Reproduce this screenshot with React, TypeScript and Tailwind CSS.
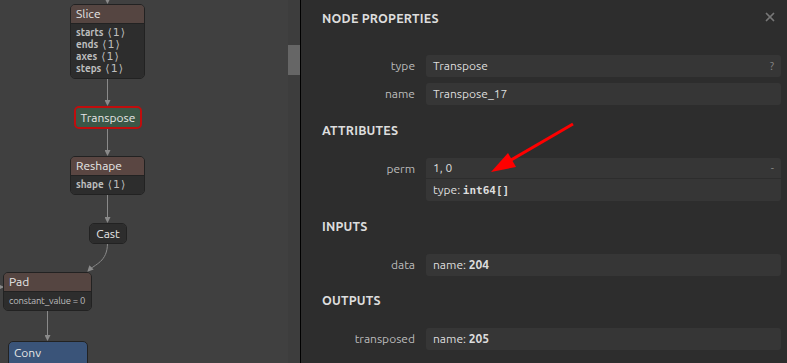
import { X } from "lucide-react";

const sans = "font-['Ubuntu','Noto_Sans','Open_Sans',sans-serif]";

function Attr({ name }: { name: string }) {
  return (
    <span>
      {name}
      <span className="font-normal font-['DejaVu_Sans',sans-serif] text-[11px] ml-[4px] tracking-[1px]">⟨1⟩</span>
    </span>
  );
}

function GraphNode({
  title,
  x,
  y,
  w,
  head,
  attrs,
  plain,
  outline = false,
}: {
  title: string;
  x: number;
  y: number;
  w: number;
  head: string;
  attrs?: string[];
  plain?: string;
  outline?: boolean;
}) {
  const hasBody = !!attrs || !!plain;
  return (
    <div
      className={`absolute rounded-[5px] overflow-hidden ${
        outline ? "border-2 border-[#c00d0d]" : "border border-[#222]"
      }`}
      style={{ left: x, top: y, width: w }}
    >
      <div
        className={`h-[19px] px-[5px] flex items-center text-[12px] text-[#e6e6e6] ${
          hasBody ? "border-b border-[#222]" : ""
        }`}
        style={{ background: head, justifyContent: hasBody ? "flex-start" : "center" }}
      >
        {title}
      </div>
      {hasBody && (
        <div className="bg-[#2d2d2d] px-[5px] py-[3px] flex flex-col">
          {attrs?.map((a) => (
            <div
              key={a}
              className="h-[12px] leading-[12px] text-[10px] text-[#bdbdbd] font-bold whitespace-nowrap"
            >
              <Attr name={a} />
            </div>
          ))}
          {plain && (
            <div className="h-[12px] leading-[12px] text-[9.5px] tracking-[-0.2px] text-[#bdbdbd] whitespace-nowrap">
              {plain}
            </div>
          )}
        </div>
      )}
    </div>
  );
}

function Graph() {
  return (
    <div className="relative w-[300px] h-full bg-[#404040] overflow-hidden">
      <svg className="absolute inset-0" width="300" height="363">
        <defs>
          <marker id="ah" markerWidth="6" markerHeight="6" refX="5" refY="3" orient="auto">
            <path d="M0,0 L6,3 L0,6 z" fill="#8a8a8a" />
          </marker>
        </defs>
        <g stroke="#8a8a8a" strokeWidth="1" fill="none" markerEnd="url(#ah)">
          <line x1="107.5" y1="-5" x2="107.5" y2="3" />
          <line x1="107.5" y1="78" x2="107.5" y2="105" />
          <line x1="107.5" y1="127" x2="107.5" y2="155" />
          <line x1="107.5" y1="194" x2="107.5" y2="222" />
          <path d="M107.5,243 C107.5,262 95,264 88,271" />
          <line x1="47.5" y1="310" x2="47.5" y2="340" />
          <line x1="-5" y1="287" x2="3" y2="287" />
        </g>
      </svg>
      <GraphNode
        title="Slice"
        x={70}
        y={4}
        w={75}
        head="#554541"
        attrs={["starts", "ends", "axes", "steps"]}
      />
      <GraphNode title="Transpose" x={74} y={106} w={68} head="#3c5747" outline />
      <GraphNode title="Reshape" x={70} y={156} w={75} head="#5a4642" attrs={["shape"]} />
      <GraphNode title="Cast" x={89} y={223} w={38} head="#2d2d2d" />
      <GraphNode title="Pad" x={3} y={272} w={89} head="#554541" plain="constant_value = 0" />
      <div className="absolute left-[8px] top-[341px] w-[80px] h-[30px] rounded-[5px] border border-[#222] bg-[#3a5479] px-[5px] pt-[2px] text-[12px] text-[#e6e6e6]">
        Conv
      </div>
      <div className="absolute right-0 top-0 w-[12px] h-full bg-[#3d3d3d]">
        <div className="mt-[45px] h-[30px] bg-[#666]" />
      </div>
    </div>
  );
}

function Row({ label, children }: { label: string; children: React.ReactNode }) {
  return (
    <div className="flex">
      <div className="w-[93px] shrink-0 text-right text-[12px] text-[#bbb] h-[22px] leading-[22px]">
        {label}
      </div>
      <div className="ml-[11px] flex-1 rounded-[3px] bg-[#363636] text-[12px] text-[#ddd]">
        {children}
      </div>
    </div>
  );
}

function Line({ children, right }: { children: React.ReactNode; right?: string }) {
  return (
    <div className="h-[22px] px-[7px] flex items-center justify-between">
      <span>{children}</span>
      {right && <span className="text-[#888] text-[11px]">{right}</span>}
    </div>
  );
}

function Section({ title }: { title: string }) {
  return (
    <div className="h-[16px] leading-[16px] text-[12.5px] font-bold text-[#ddd] tracking-[0.2px]">
      {title}
    </div>
  );
}

export default function App() {
  return (
    <div className={`flex w-[787px] h-[363px] overflow-hidden ${sans}`}>
      <Graph />
      <div className="w-px bg-black" />
      <div className="relative flex-1 bg-[#2d2d2d] pl-[21px] pr-[6px] flex flex-col">
        <div className="h-[36px] flex items-center justify-between">
          <span className="text-[12.5px] font-bold text-[#ddd] tracking-[0.2px]">NODE PROPERTIES</span>
          <X size={14} strokeWidth={3} className="text-[#777] mr-[4px] -mt-[3px]" />
        </div>
        <div className="mt-[19px]">
          <Row label="type">
            <Line right="?">Transpose</Line>
          </Row>
        </div>
        <div className="mt-[6px]">
          <Row label="name">
            <Line>Transpose_17</Line>
          </Row>
        </div>
        <div className="mt-[17px]">
          <Section title="ATTRIBUTES" />
        </div>
        <div className="mt-[20px]">
          <Row label="perm">
            <div className="h-[21px] px-[7px] flex items-center justify-between border-b border-[#2d2d2d]">
              <span>1, 0</span>
              <span className="text-[#888] text-[11px]">-</span>
            </div>
            <Line>
              type:{" "}
              <span className="font-['DejaVu_Sans_Mono',monospace] font-bold text-[11px]">int64[]</span>
            </Line>
          </Row>
        </div>
        <div className="mt-[17px]">
          <Section title="INPUTS" />
        </div>
        <div className="mt-[20px]">
          <Row label="data">
            <Line>
              name: <b>204</b>
            </Line>
          </Row>
        </div>
        <div className="mt-[16px]">
          <Section title="OUTPUTS" />
        </div>
        <div className="mt-[20px]">
          <Row label="transposed">
            <Line>
              name: <b>205</b>
            </Line>
          </Row>
        </div>
        <svg className="absolute left-0 top-0 pointer-events-none" width="486" height="363">
          <line x1="272" y1="124" x2="205" y2="163" stroke="#f00" strokeWidth="3" />
          <polygon points="190,172 207,153 215,167" fill="#f00" />
        </svg>
      </div>
    </div>
  );
}
